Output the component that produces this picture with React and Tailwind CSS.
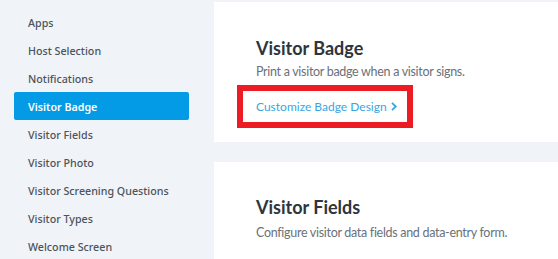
export default function App() {
  const items = [
    "Apps",
    "Host Selection",
    "Notifications",
    "Visitor Badge",
    "Visitor Fields",
    "Visitor Photo",
    "Visitor Screening Questions",
    "Visitor Types",
    "Welcome Screen",
  ];
  return (
    <div
      className="w-[558px] h-[259px] overflow-hidden bg-[#f0f3f8] flex"
      style={{ fontFamily: "Lato, 'Open Sans', sans-serif" }}
    >
      <div
        className="w-[214px] shrink-0 pt-[8px] pl-[14px] pr-[25px]"
        style={{ fontFamily: "'Noto Sans', Lato, sans-serif" }}
      >
        {items.map((it) => (
          <div
            key={it}
            className={
              it === "Visitor Badge"
                ? "h-[28px] flex items-center pl-[14px] pt-[2px] rounded-[2px] bg-[#039be5] text-white text-[10.7px] font-semibold whitespace-nowrap"
                : "h-[28px] flex items-center pl-[14px] pt-[2px] text-[#4b535b] text-[10.7px] font-medium whitespace-nowrap"
            }
          >
            {it}
          </div>
        ))}
      </div>
      <div className="flex-1 flex flex-col gap-[20px] pt-[2px]">
        <div className="h-[140px] bg-white pl-[42px] pt-[34px]">
          <div className="text-[18px] leading-[24px] font-bold text-[#2e353c] whitespace-nowrap">
            Visitor Badge
          </div>
          <div className="mt-[4px] text-[12.5px] tracking-[-0.3px] leading-[16px] text-[#6a7178] whitespace-nowrap">
            Print a visitor badge when a visitor signs.
          </div>
          <div className="mt-[5px] ml-[-19px] flex items-center h-[43px] w-[176px] border-[6px] border-[#ec1c24] pl-[13px] text-[12px] text-[#3aa5e2] whitespace-nowrap">
            Customize Badge Design
            <svg width="8" height="11" viewBox="0 0 8 11" className="ml-[3px]">
              <path d="M2 1.8 L5.8 5.5 L2 9.2" fill="none" stroke="#3aa5e2" strokeWidth="1.8" />
            </svg>
          </div>
        </div>
        <div className="flex-1 bg-white pl-[42px] pt-[33px]">
          <div className="text-[18px] leading-[24px] font-bold text-[#2e353c] whitespace-nowrap">
            Visitor Fields
          </div>
          <div className="mt-[6px] text-[12.5px] tracking-[-0.3px] leading-[16px] text-[#6a7178] whitespace-nowrap">
            Configure visitor data fields and data-entry form.
          </div>
        </div>
      </div>
    </div>
  );
}
